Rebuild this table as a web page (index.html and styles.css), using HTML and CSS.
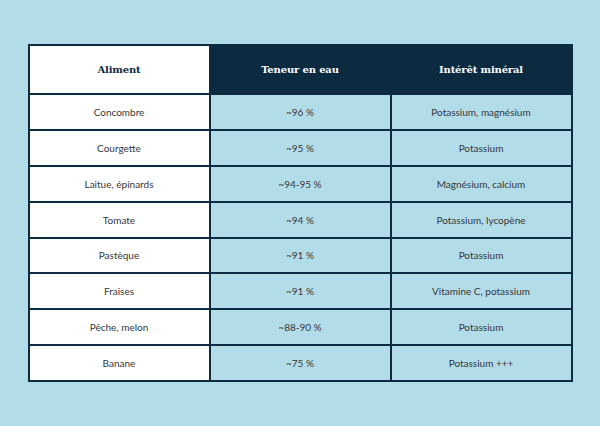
FILE: index.html
```html
<!DOCTYPE html>
<html lang="fr">
<head>
<meta charset="utf-8">
<link rel="stylesheet" href="styles.css">
</head>
<body>
<main class="page">
<table class="water">
<thead>
<tr><th class="h-light">Aliment</th><th class="h-dark">Teneur en eau</th><th class="h-dark">Intérêt minéral</th></tr>
</thead>
<tbody>
<tr><td class="c-food">Concombre</td><td>~96 %</td><td>Potassium, magnésium</td></tr>
<tr><td class="c-food">Courgette</td><td>~95 %</td><td>Potassium</td></tr>
<tr><td class="c-food">Laitue, épinards</td><td>~94-95 %</td><td>Magnésium, calcium</td></tr>
<tr><td class="c-food">Tomate</td><td>~94 %</td><td>Potassium, lycopène</td></tr>
<tr><td class="c-food">Pastèque</td><td>~91 %</td><td>Potassium</td></tr>
<tr><td class="c-food">Fraises</td><td>~91 %</td><td>Vitamine C, potassium</td></tr>
<tr><td class="c-food">Pêche, melon</td><td>~88-90 %</td><td>Potassium</td></tr>
<tr><td class="c-food">Banane</td><td>~75 %</td><td>Potassium +++</td></tr>
</tbody>
</table>
</main>
</body>
</html>
```
FILE: styles.css
```css
html, body {
  margin: 0;
  padding: 0;
}
body {
  background: #b3dce9;
  width: 600px;
  height: 426px;
  overflow: hidden;
}
.page {
  height: 426px;
  display: flex;
  align-items: center;
  justify-content: center;
}
.water {
  width: 545px;
  border-collapse: collapse;
  border: 2px solid #0c2a40;
  table-layout: fixed;
}
.water th {
  height: 47px;
  font-family: "DejaVu Serif", serif;
  font-weight: bold;
  font-size: 10px;
  letter-spacing: -0.15px;
  text-align: center;
  border: 2px solid #0c2a40;
  padding: 0;
}
.h-light {
  background: #ffffff;
  color: #0c2a40;
}
.h-dark {
  background: #0c2a40;
  color: #ffffff;
}
.water td {
  height: 33.8px;
  padding: 0;
  text-align: center;
  font-family: "Lato", "Liberation Sans", sans-serif;
  font-size: 10px;
  color: #33373b;
  border: 2px solid #0c2a40;
  background: #b3dce9;
}
.water td.c-food {
  background: #ffffff;
}
```
